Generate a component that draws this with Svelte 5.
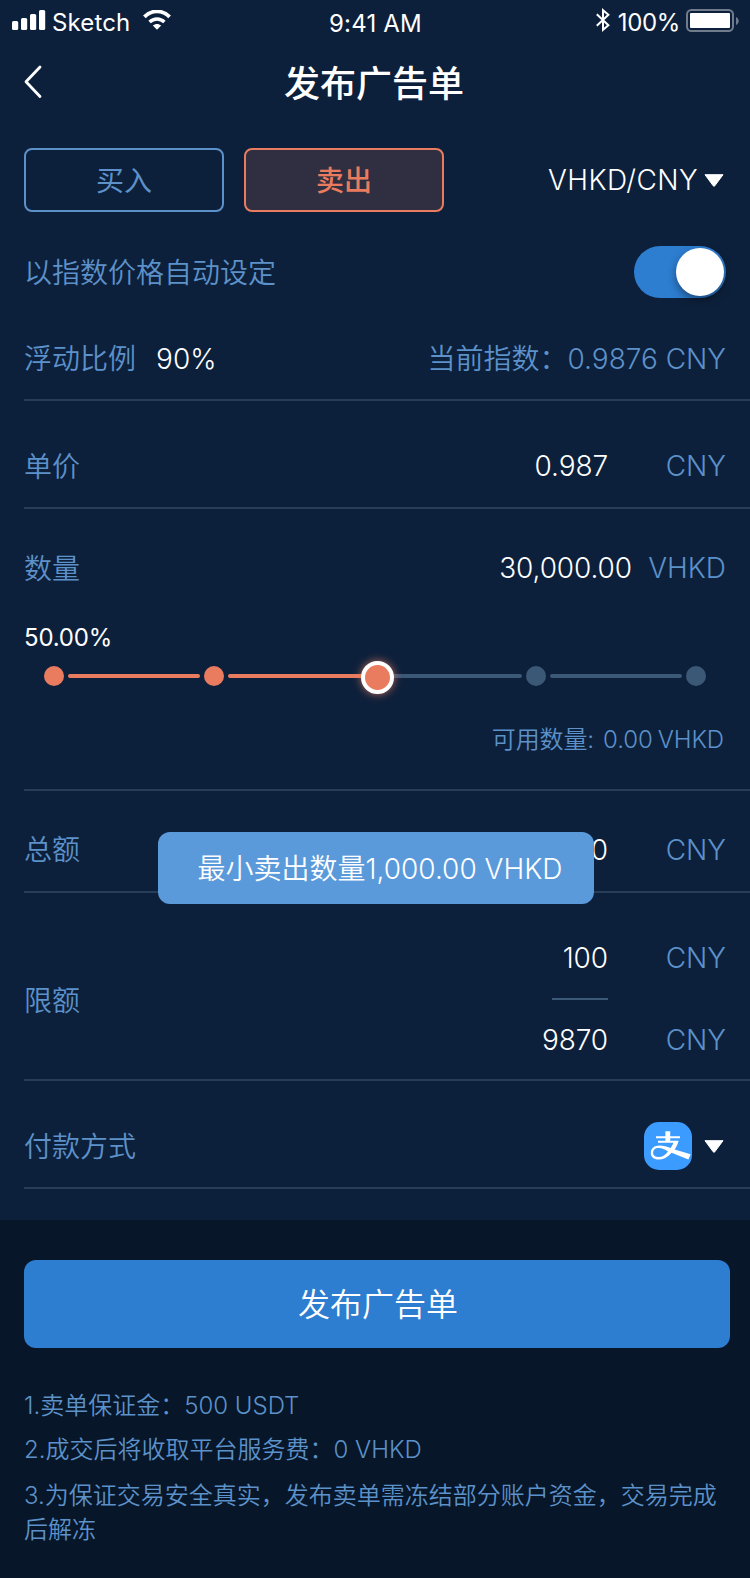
<script>
  const notes = [
    '1.卖单保证金：500 USDT',
    '2.成交后将收取平台服务费：0 VHKD',
    '3.为保证交易安全真实，发布卖单需冻结部分账户资金，交易完成后解冻'
  ];
</script>

<main class="screen">
  <header class="status">
    <div class="side">
      <svg class="signal" width="34" height="22" viewBox="0 0 34 22" fill="#fff">
        <rect x="0" y="11" width="6.2" height="9" rx="1.6" />
        <rect x="9" y="8" width="6.2" height="12" rx="1.6" />
        <rect x="18" y="4" width="6.2" height="16" rx="1.6" />
        <rect x="27" y="0" width="6.2" height="20" rx="1.6" />
      </svg>
      <span class="carrier">Sketch</span>
      <svg class="wifi" width="28" height="20" viewBox="0 0 28 20" fill="none" stroke="#fff">
        <path d="M1.4 6.8C8.5-.4 19.5-.4 26.6 6.8" stroke-width="3.8" />
        <path d="M6.6 12C10.8 7.9 17.2 7.9 21.4 12" stroke-width="3.5" />
        <path d="M9.8 15.6C12.3 13.4 15.7 13.4 18.2 15.6L14 19.8Z" fill="#fff" stroke="none" />
      </svg>
    </div>
    <span class="time">9:41 AM</span>
    <div class="side end">
      <svg class="bt" width="14" height="24" viewBox="0 0 14 24" fill="none" stroke="#fff" stroke-width="2">
        <path d="M.8 6.3L12.4 17.2L7 21.8V2.2L12.4 6.8L.8 17.7" />
      </svg>
      <span class="percent">100%</span>
      <svg width="53" height="23" viewBox="0 0 53 23">
        <rect x="1" y="1" width="46" height="21" rx="4.5" fill="none" stroke="#707b8c" stroke-width="2" />
        <rect x="4" y="4" width="40" height="15" rx="1" fill="#fff" />
        <path d="M50 8C53.6 9.5 53.6 14.5 50 16Z" fill="#707b8c" />
      </svg>
    </div>
  </header>

  <nav class="nav">
    <svg class="back" width="20" height="34" viewBox="0 0 20 34" fill="none" stroke="#fff" stroke-width="2.8" stroke-linecap="round" stroke-linejoin="round">
      <path d="M16 2L2 16.8L16 31.5" />
    </svg>
    <h1>发布广告单</h1>
  </nav>

  <section class="side-select">
    <button class="tab">买入</button>
    <button class="tab sell">卖出</button>
    <div class="pair">
      <span>VHKD/CNY</span>
      <svg class="caret" width="20" height="13" viewBox="0 0 20 13"><path d="M1 .7H19L10.8 11.8Q10 12.8 9.2 11.8Z" fill="#fff" stroke="#fff" stroke-linejoin="round" /></svg>
    </div>
  </section>

  <section class="auto">
    <span>以指数价格自动设定</span>
    <div class="switch"><i></i></div>
  </section>

  <section class="row ratio">
    <span>浮动比例</span>
    <b class="ratio-value">90%</b>
    <span class="index">当前指数：0.9876 CNY</span>
  </section>

  <section class="row price">
    <span>单价</span>
    <b>0.987</b>
    <span class="unit">CNY</span>
  </section>

  <section class="amount">
    <div class="amount-line">
      <span>数量</span>
      <b>30,000.00</b>
      <span class="unit wide">VHKD</span>
    </div>
    <div class="share">50.00%</div>
    <div class="slider">
      <i class="dot on"></i>
      <i class="seg on"></i>
      <i class="dot on"></i>
      <i class="seg on long"></i>
      <i class="handle"></i>
      <i class="seg"></i>
      <i class="dot"></i>
      <i class="seg"></i>
      <i class="dot"></i>
    </div>
    <div class="available">可用数量:<span>0.00</span><span class="av-unit">VHKD</span></div>
  </section>

  <section class="row total">
    <span>总额</span>
    <b>29610</b>
    <span class="unit">CNY</span>
    <div class="toast">最小卖出数量1,000.00 VHKD</div>
  </section>

  <section class="row limit">
    <span class="limit-label">限额</span>
    <div class="range">
      <div class="bound"><b>100</b><span class="unit">CNY</span></div>
      <i class="rule"></i>
      <div class="bound"><b>9870</b><span class="unit">CNY</span></div>
    </div>
  </section>

  <section class="row pay">
    <span>付款方式</span>
    <svg class="alipay" width="48" height="48" viewBox="0 0 48 48">
      <rect width="48" height="48" rx="15" fill="#3c9bff" />
      <path d="M12 14.2H36V16.2H12ZM21.4 9.2H26.2V20H21.4Z" fill="#fff" />
      <path d="M14 18.8H34.6C33.6 22.6 32.2 25.2 30.6 27.5L46.6 32.2L44.4 37.4L27.6 30.8C23.7 35.4 19 37.6 14.6 37.6C9.8 37.6 6.8 34.8 6.8 31C6.8 26.1 10.4 23.4 15.4 23.4C19.3 23.4 23 24.7 26.6 25.9C28 24.2 28.8 22.6 29.4 20.8H14ZM24 29.4C21 27.6 18 26 14.6 26C11.2 26 9.1 27.9 9.1 31C9.1 33.5 11.2 35.1 14.6 35.1C18.6 35.1 21.6 32.7 24 29.4Z" fill="#fff" fill-rule="evenodd" />
    </svg>
    <svg class="caret" width="20" height="13" viewBox="0 0 20 13"><path d="M1 .7H19L10.8 11.8Q10 12.8 9.2 11.8Z" fill="#fff" stroke="#fff" stroke-linejoin="round" /></svg>
  </section>

  <footer>
    <button class="submit">发布广告单</button>
    <div class="notes">
      {#each notes as note}
        <p>{note}</p>
      {/each}
    </div>
  </footer>
</main>

<style>
  :global(body) {
    margin: 0;
    background: #071628;
  }
  .screen {
    width: 750px;
    height: 1578px;
    display: flex;
    flex-direction: column;
    overflow: hidden;
    box-sizing: border-box;
    background: #0d203b;
    color: #5c91c9;
    font: 350 28px/40px Inter, 'Noto Sans CJK SC DemiLight', 'Noto Sans CJK SC', sans-serif;
    white-space: nowrap;
  }
  section, header, nav, footer, button { box-sizing: border-box; }
  button { font: inherit; padding: 2px 0 0; cursor: pointer; }
  b { font-weight: 350; color: #fff; font-size: 28px; letter-spacing: -.1px; }
  section span { padding-top: 2px; }
  section .unit { padding-top: 0; }
  svg { display: block; flex: none; }

  .status {
    height: 40px;
    display: grid;
    grid-template-columns: 1fr auto 1fr;
    padding: 0 11px 0 12px;
    color: #fff;
    font-size: 24px;
    font-weight: 400;
  }
  .side { display: flex; align-items: flex-start; }
  .end { justify-content: flex-end; }
  .side svg { margin-top: 9px; }
  .side .signal { margin-top: 10px; }
  .carrier { width: 77px; margin-left: 6px; line-height: 46px; letter-spacing: .15px; }
  .side .wifi { margin: 10px 0 0 14px; }
  .time { line-height: 48px; letter-spacing: .2px; }
  .side .bt { margin: 8px 8px 0 0; }
  .percent { line-height: 46px; margin-right: 6px; letter-spacing: -.35px; }

  .nav {
    height: 88px;
    display: grid;
    grid-template-columns: 60px 1fr 60px;
    align-items: center;
    padding: 0 0 4px;
  }
  .back { margin-left: 24px; }
  h1 {
    margin: 0 2px 0 0;
    padding-bottom: 2px;
    text-align: center;
    color: #fff;
    font: 500 36px/50px 'Noto Sans CJK SC', sans-serif;
  }

  .side-select {
    height: 84px;
    padding: 20px 26px 0 24px;
    display: flex;
    gap: 20px;
  }
  .tab {
    width: 200px;
    height: 64px;
    border: 2px solid #5c91c9;
    border-radius: 8px;
    background: none;
    color: #5c91c9;
    font-family: Inter, 'Noto Sans CJK SC', sans-serif;
    font-weight: 400;
  }
  .tab.sell { border-color: #e97c5f; background: #302f42; color: #e97c5f; font-weight: 500; }
  .pair {
    flex: 1;
    display: flex;
    justify-content: flex-end;
    align-items: center;
    gap: 6px;
    color: #fff;
    letter-spacing: .4px;
  }
  .pair span { padding-top: 0; }

  .auto {
    height: 120px;
    padding: 0 24px;
    display: flex;
    align-items: center;
    justify-content: space-between;
  }
  .switch {
    width: 92px;
    height: 52px;
    padding: 2px;
    box-sizing: border-box;
    border-radius: 26px;
    background: #2d7dd0;
    display: flex;
    justify-content: flex-end;
  }
  .switch i {
    width: 48px;
    height: 48px;
    border-radius: 50%;
    background: #fff;
    box-shadow: 0 4px 8px rgba(0, 0, 0, .4);
  }

  .row {
    margin-left: 24px;
    padding-right: 24px;
    border-bottom: 2px solid #283d57;
    display: flex;
    align-items: center;
    position: relative;
  }
  .row b, .amount-line b { margin-left: auto; }
  .unit { width: 118px; text-align: right; }
  .ratio { height: 69px; padding-bottom: 15px; }
  .row .ratio-value { margin: 0 auto 0 20px; padding-top: 2px; letter-spacing: .1px; }
  .price { height: 108px; padding-top: 24px; }

  .amount { height: 282px; margin-left: 24px; border-bottom: 2px solid #283d57; }
  .amount-line { height: 118px; padding-right: 24px; display: flex; align-items: center; }
  .unit.wide { width: 94px; }
  .share { height: 20px; color: #fff; font-size: 24px; font-weight: 400; line-height: 22px; letter-spacing: -.2px; }
  .slider { height: 60px; padding: 0 44px 2px 20px; display: flex; align-items: center; gap: 4px; box-sizing: border-box; }
  .dot { width: 20px; height: 20px; border-radius: 50%; background: #3b5877; }
  .seg { width: 132px; height: 4px; border-radius: 2px; background: #3b5877; }
  .seg.long { width: 136px; }
  .slider .on { background: #e97c5f; }
  .handle {
    width: 33px;
    height: 33px;
    margin: 2px -8px 0 -7px;
    box-sizing: border-box;
    border: 4px solid #fff;
    border-radius: 50%;
    background: #e97c5f;
    box-shadow: 0 0 8px rgba(233, 124, 95, .8);
    z-index: 1;
  }
  .available { padding: 13px 26px 0 0; font-size: 24px; display: flex; justify-content: flex-end; letter-spacing: -.1px; }
  .available span { margin-left: 9px; padding: 0; }
  .available .av-unit { margin-left: 5px; }

  .total { height: 102px; padding-top: 16px; }
  .total b, .total .unit { padding-top: 2px; }
  .toast {
    position: absolute;
    left: 134px;
    top: 41px;
    width: 436px;
    height: 72px;
    line-height: 74px;
    border-radius: 12px;
    background: #5a9adb;
    color: #fff;
    text-align: center;
    box-sizing: border-box;
    padding-left: 8px;
    z-index: 2;
  }

  .limit { height: 188px; padding-top: 25px; }
  .row .limit-label { padding-top: 5px; }
  .range { margin-left: auto; display: flex; flex-direction: column; }
  .bound { width: 194px; height: 80px; display: flex; align-items: center; }
  .rule { width: 56px; height: 2px; margin-left: 20px; background: #3b5877; }

  .pay { height: 108px; padding: 24px 26px 0 0; }
  .alipay { margin: 0 12px 0 auto; }

  footer {
    margin-top: 31px;
    flex: 1;
    background: #071628;
    padding: 40px 20px 0 24px;
  }
  .submit {
    display: block;
    width: 706px;
    height: 88px;
    padding-left: 2px;
    border: 0;
    border-radius: 12px;
    background: #2d7dd0;
    color: #fff;
    font-size: 32px;
  }
  .notes {
    margin-top: 41px;
    width: 702px;
    font-size: 24px;
    line-height: 34px;
    white-space: normal;
  }
  p { margin: 0 0 10px; }
  p:last-child { padding-top: 2px; }
</style>
